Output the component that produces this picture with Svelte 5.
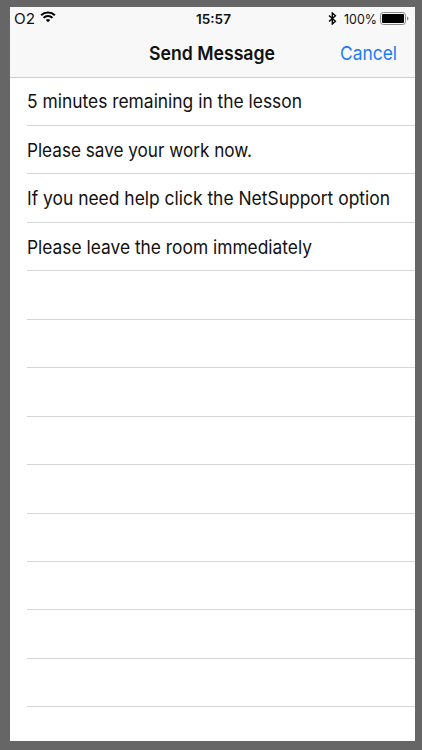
<script lang="ts">
  const messages = [
    { text: "5 minutes remaining in the lesson", width: 275 },
    { text: "Please save your work now.", width: 225 },
    { text: "If you need help click the NetSupport option", width: 363 },
    { text: "Please leave the room immediately", width: 285 },
  ];
  const rows = Array.from({ length: 13 }, (_, i) => messages[i]);
</script>

{#snippet label(text: string, width: number)}
  <svg class="label" {width} height="24">
    <text x="0" y="18.6" textLength={width} lengthAdjust="spacingAndGlyphs">{text}</text>
  </svg>
{/snippet}

<main class="screen">
  <header class="top">
    <div class="status">
      <div class="carrier">
        {@render label("O2", 21)}
        <svg width="16" height="12" viewBox="0 0 16 12" aria-hidden="true">
          <path
            d="M1.1 4.3a10 10 0 0 1 13.8 0M3.5 6.9a6.4 6.4 0 0 1 9 0"
            fill="none"
            stroke="#000"
            stroke-width="2"
          />
          <path d="M5.8 8.9a3.3 3.3 0 0 1 4.4 0L8 11.3z" />
        </svg>
      </div>
      <div class="time">{@render label("15:57", 35)}</div>
      <div class="power">
        <svg class="bluetooth" width="9" height="13" viewBox="0 0 9 13" aria-hidden="true">
          <path d="M1 3.4 7.4 9.2 4.3 12V1l3.1 2.8L1 9.6" fill="none" stroke="#000" stroke-width="1.4" />
        </svg>
        {@render label("100%", 33)}
        <svg width="29" height="13" viewBox="0 0 29 13" aria-hidden="true">
          <rect x=".5" y=".5" width="25" height="12" rx="2.8" fill="none" stroke="#888" />
          <rect x="2" y="2" width="22" height="9" rx="1" />
          <path d="M27 4.5c2 .7 2 3.3 0 4z" fill="#888" />
        </svg>
      </div>
    </div>
    <nav class="bar">
      <h1>{@render label("Send Message", 126)}</h1>
      <button type="button">{@render label("Cancel", 57)}</button>
    </nav>
  </header>

  <ul>
    {#each rows as row}
      <li>
        {#if row}
          {@render label(row.text, row.width)}
        {/if}
      </li>
    {/each}
  </ul>
</main>

<style>
  :global(body) {
    margin: 0;
    background: #666;
  }

  :global(#app) {
    display: flow-root;
    height: 750px;
  }

  .screen {
    box-sizing: border-box;
    width: 404.5px;
    height: 734px;
    margin: 7px 0 0 10px;
    overflow: hidden;
    background: #fff;
    color: #111;
    font-family: Inter, sans-serif;
    font-size: 18.6px;
  }

  .label {
    display: block;
    overflow: visible;
    fill: currentColor;
  }

  .top {
    box-sizing: border-box;
    height: 71px;
    border-bottom: 1px solid #ccc;
    background: #f8f8f8;
  }

  .status {
    display: grid;
    grid-template-columns: 1fr auto 1fr;
    align-items: center;
    height: 22px;
    padding: 0 5.5px 0 4px;
    font-size: 13px;
  }

  .carrier,
  .power {
    display: flex;
    align-items: center;
  }

  .carrier {
    gap: 5px;
    font-size: 14.5px;
  }

  .power {
    justify-content: flex-end;
    gap: 3px;
  }

  .carrier .label,
  .power .label,
  .time .label {
    margin-top: -3px;
  }

  .carrier > svg:last-child {
    margin-top: -2px;
  }

  .bluetooth {
    margin-right: 4px;
  }

  .time {
    padding-left: 4px;
    font-weight: 600;
  }

  .bar {
    display: grid;
    grid-template-columns: 1fr auto 1fr;
    align-items: center;
    height: 48px;
    padding: 0 17.5px;
  }

  h1 {
    grid-column: 2;
    margin: 0;
    font-size: 19px;
    font-weight: 600;
  }

  button {
    justify-self: end;
    padding: 0;
    border: 0;
    background: none;
    color: #1c7cf2;
    font: inherit;
    font-size: 19px;
  }

  ul {
    margin: -0.45px 0 0;
    padding: 0 0 0 17px;
    list-style: none;
  }

  li {
    box-sizing: border-box;
    display: flex;
    align-items: center;
    height: 48.45px;
    border-bottom: 1px solid #d6d6d8;
  }
</style>
